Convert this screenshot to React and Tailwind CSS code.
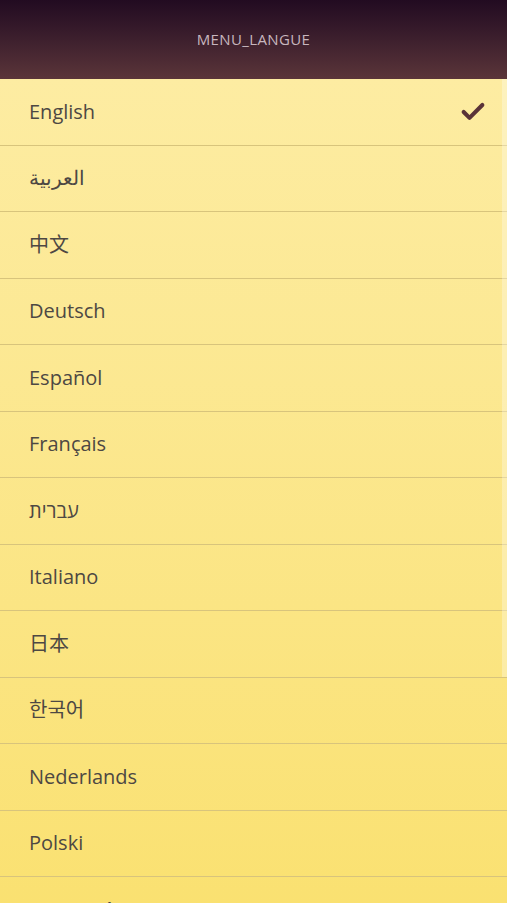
import { Check } from 'lucide-react';

const languages = [
  { label: 'English', selected: true },
  { label: 'العربية' },
  { label: '中文' },
  { label: 'Deutsch' },
  { label: 'Español' },
  { label: 'Français' },
  { label: 'עברית' },
  { label: 'Italiano' },
  { label: '日本' },
  { label: '한국어' },
  { label: 'Nederlands' },
  { label: 'Polski' },
  { label: 'Português' },
];

export default function App() {
  return (
    <div
      className="flex flex-col h-[903px] w-full overflow-hidden"
      style={{ fontFamily: '"Open Sans", "Noto Sans CJK SC", "Noto Sans", sans-serif' }}>
      {/* Header */}
      <div className="h-[79px] shrink-0 flex items-center justify-center bg-gradient-to-b from-[#220b21] to-[#5b3539]">
        <span className="text-[15px] text-[#c7b6be] tracking-wide">MENU_LANGUE</span>
      </div>

      {/* Language list */}
      <div className="relative flex-1 overflow-hidden bg-gradient-to-b from-[#fdeca2] to-[#fae171]">
        {languages.map((lang) => (
          <div
            key={lang.label}
            className="h-[66.5px] shrink-0 flex items-center justify-between pl-[29px] pr-[20px] border-b border-[#d8c47c]">
            <span className="text-[20px] text-[#4d4843]">{lang.label}</span>
            {lang.selected && <Check className="w-[28px] h-[28px] text-[#5a3338]" strokeWidth={3.5} />}
          </div>
        ))}

        {/* Scrollbar thumb */}
        <div className="absolute top-0 right-0 w-[5px] h-[598px] bg-white/30" />
      </div>
    </div>
  );
}
